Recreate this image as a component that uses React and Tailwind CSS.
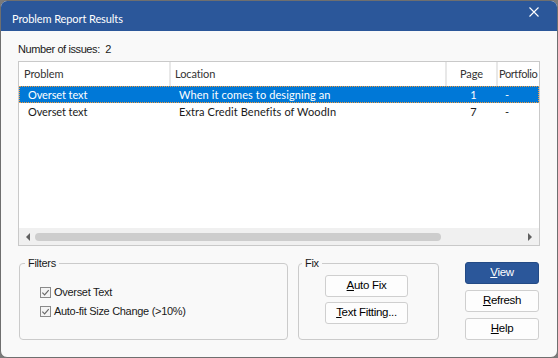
import React from "react";

const ROWS = [
  { problem: "Overset text", location: "When it comes to designing an", page: "1", portfolio: "-", selected: true },
  { problem: "Overset text", location: "Extra Credit Benefits of WoodIn", page: "7", portfolio: "-" },
];

const uiFont = { fontFamily: '"Liberation Sans", Arial, sans-serif' };
const listFont = { fontFamily: 'Lato, "Noto Sans", sans-serif' };

function Btn({ children, primary, wide }) {
  const size = wide ? "w-[83px]" : "w-[74px]";
  return (
    <button
      className={
        primary
          ? `h-[22px] ${size} rounded-[3px] border border-[#234a85] bg-[#2b579a] text-white`
          : `h-[22px] ${size} rounded-[3px] border border-[#cfcfcf] bg-[#fdfdfd] text-black`
      }
    >
      {children}
    </button>
  );
}

function Check({ label }) {
  return (
    <label className="flex h-[19px] items-center gap-[3px]">
      <span className="flex h-[11px] w-[11px] items-center justify-center border border-[#8a8a8a] bg-[#f4f4f4]">
        <svg viewBox="0 0 10 10" className="h-[9px] w-[9px]">
          <path d="M1.5 5.2 L4 7.6 L8.6 2.4" fill="none" stroke="#6a6a6a" strokeWidth="1.3" />
        </svg>
      </span>
      <span>{label}</span>
    </label>
  );
}

export default function App() {
  return (
    <div className="h-[358px] w-[558px] bg-[#7a7a7a]">
      <div className="flex h-full flex-col overflow-hidden rounded-[7px] border border-[#6f6f6f] bg-[#f9f9f9] text-[11px] tracking-[-0.3px] text-[#1a1a1a]">
        <div className="flex h-[30px] shrink-0 justify-between bg-[#2b579a] pl-[11px] pr-[18px] text-white">
          <span className="mt-[10px] text-[11px] tracking-[-0.1px]" style={listFont}>
            Problem Report Results
          </span>
          <svg viewBox="0 0 10 10" className="mt-[6px] h-[10px] w-[10px]">
            <path d="M0.5 0.5 L9.5 9.5 M9.5 0.5 L0.5 9.5" stroke="white" strokeWidth="1.1" />
          </svg>
        </div>

        <div className="flex flex-1 flex-col pl-[17px] pr-[17px]" style={uiFont}>
          <div className="mt-[11px] h-[15px] leading-[15px] tracking-[-0.4px]">Number of issues:&nbsp; 2</div>

          <div className="mt-[4px] flex h-[185px] w-[522px] flex-col border border-[#c9c9c9] bg-white">
            <div className="flex flex-1 flex-col overflow-hidden text-[11px]" style={listFont}>
              <div className="grid h-[24px] grid-cols-[152px_276px_51px_41px] tracking-[-0.1px] text-[#333]">
                <div className="flex items-center border-r-2 border-[#e8e8e8] pl-[5px]">Problem</div>
                <div className="flex items-center border-r-2 border-[#e8e8e8] pl-[4px]">Location</div>
                <div className="flex items-center justify-center border-r-2 border-[#e8e8e8]">Page</div>
                <div className="flex items-center whitespace-nowrap pl-[1px] tracking-[-0.4px]">Portfolio</div>
              </div>
              {ROWS.map((r, i) => (
                <div
                  key={i}
                  className={
                    r.selected
                      ? "grid h-[17px] grid-cols-[152px_276px_51px_41px] border border-dotted border-[#f39a3b] bg-[#0078d7] leading-[15px] tracking-[0.1px] text-white"
                      : "grid h-[17px] grid-cols-[152px_276px_51px_41px] border border-transparent leading-[15px] tracking-[0.1px] text-[#1a1a1a]"
                  }
                >
                  <div className="pl-[8px] tracking-[-0.1px]">{r.problem}</div>
                  <div className="pl-[7px]">{r.location}</div>
                  <div className="text-center">{r.page}</div>
                  <div className="pl-[6px]">{r.portfolio}</div>
                </div>
              ))}
            </div>

            <div className="flex h-[17px] items-center bg-[#f0f0f0] px-[7px]">
              <svg viewBox="0 0 4 8" className="h-[8px] w-[4px]">
                <path d="M4 0 L0 4 L4 8 Z" fill="#606060" />
              </svg>
              <div className="ml-[5px] h-[8px] w-[406px] rounded-full bg-[#cdcdcd]" />
              <div className="flex-1" />
              <svg viewBox="0 0 4 8" className="h-[8px] w-[4px]">
                <path d="M0 0 L4 4 L0 8 Z" fill="#606060" />
              </svg>
            </div>
          </div>

          <div className="mt-[10px] flex">
            <fieldset className="ml-[1px] h-[84px] w-[269px] rounded-[4px] border border-[#cbcbcb]">
              <legend className="ml-[5px] px-[3px] leading-[14px]">Filters</legend>
              <div className="pl-[20px] pt-[13px]">
                <Check label="Overset Text" />
                <Check label="Auto-fit Size Change (>10%)" />
              </div>
            </fieldset>

            <fieldset className="ml-[10px] h-[84px] w-[141px] rounded-[4px] border border-[#cbcbcb] text-[11.5px]">
              <legend className="ml-[3px] px-[3px] text-[11px] leading-[14px]">Fix</legend>
              <div className="flex flex-col gap-[5px] pl-[26px] pt-[5px]">
                <Btn wide>
                  <u>A</u>uto Fix
                </Btn>
                <Btn wide>
                  <u>T</u>ext Fitting...
                </Btn>
              </div>
            </fieldset>

            <div className="ml-[26px] mt-[6px] flex flex-col gap-[6px] text-[11.5px]">
              <Btn primary>
                <u>V</u>iew
              </Btn>
              <Btn>
                <u>R</u>efresh
              </Btn>
              <Btn>
                <u>H</u>elp
              </Btn>
            </div>
          </div>
        </div>
      </div>
    </div>
  );
}
